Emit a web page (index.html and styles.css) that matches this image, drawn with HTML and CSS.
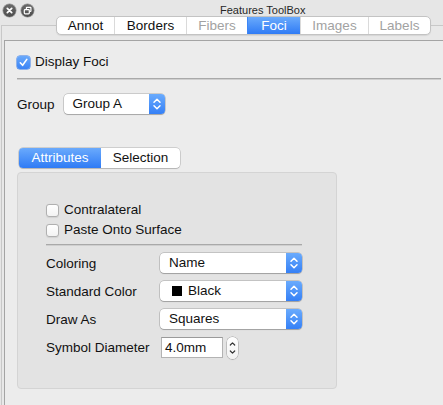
FILE: index.html
```html
<!DOCTYPE html>
<html>
<head>
<meta charset="utf-8">
<title>Features ToolBox</title>
<link rel="stylesheet" href="styles.css">
</head>
<body>
<div class="window">
  <header class="titlebar">
    <div class="lights">
      <span class="light"><svg width="13" height="13" viewBox="0 0 13 13"><path d="M4.3 4.3 L8.7 8.7 M8.7 4.3 L4.3 8.7" stroke="#fff" stroke-width="1.7" stroke-linecap="round" fill="none"/></svg></span>
      <span class="light"><svg width="13" height="13" viewBox="0 0 13 13"><rect x="3.3" y="5.6" width="5" height="4.2" rx="0.8" stroke="#fff" stroke-width="1.2" fill="none"/><path d="M5.4 5.2 V3.8 Q5.4 3.3 5.9 3.3 H9.4 Q9.9 3.3 9.9 3.8 V7 Q9.9 7.5 9.4 7.5 H8.8" stroke="#fff" stroke-width="1.2" fill="none"/></svg></span>
    </div>
    <div class="title">Features ToolBox</div>
  </header>

  <nav class="tabs">
    <span class="tab tab-annot">Annot</span>
    <span class="tab tab-borders">Borders</span>
    <span class="tab tab-fibers disabled">Fibers</span>
    <span class="tab tab-foci selected">Foci</span>
    <span class="tab tab-images disabled">Images</span>
    <span class="tab tab-labels disabled">Labels</span>
  </nav>

  <section class="pane">
    <div class="frame">
      <div class="check-row">
        <span class="cb checked"><svg width="13" height="13" viewBox="0 0 13 13"><path d="M3.3 6.8 L5.6 9.3 L9.8 3.4" stroke="#fff" stroke-width="1.6" stroke-linecap="round" stroke-linejoin="round" fill="none"/></svg></span>
        <span>Display Foci</span>
      </div>
      <div class="sep"></div>

      <div class="group-row">
        <span>Group</span>
        <div class="combo combo-group">
          <span class="combo-label">Group A</span>
          <span class="combo-btn"><svg width="16" height="20" viewBox="0 0 16 20"><path d="M5 8.3 L8 5.3 L11 8.3 M5 11.7 L8 14.7 L11 11.7" stroke="#fff" stroke-width="1.5" stroke-linecap="round" stroke-linejoin="round" fill="none"/></svg></span>
        </div>
      </div>

      <div class="seg">
        <span class="seg-item selected">Attributes</span>
        <span class="seg-item seg-sel">Selection</span>
      </div>

      <div class="box">
        <div class="check-row small">
          <span class="cb"></span>
          <span>Contralateral</span>
        </div>
        <div class="check-row small second">
          <span class="cb"></span>
          <span>Paste Onto Surface</span>
        </div>
        <div class="sep inner"></div>

        <div class="form">
          <span class="flabel">Coloring</span>
          <div class="combo">
            <span class="combo-label">Name</span>
            <span class="combo-btn"><svg width="16" height="20" viewBox="0 0 16 20"><path d="M5 8.3 L8 5.3 L11 8.3 M5 11.7 L8 14.7 L11 11.7" stroke="#fff" stroke-width="1.5" stroke-linecap="round" stroke-linejoin="round" fill="none"/></svg></span>
          </div>

          <span class="flabel">Standard Color</span>
          <div class="combo">
            <span class="combo-label swatch-label"><span class="swatch"></span>Black</span>
            <span class="combo-btn"><svg width="16" height="20" viewBox="0 0 16 20"><path d="M5 8.3 L8 5.3 L11 8.3 M5 11.7 L8 14.7 L11 11.7" stroke="#fff" stroke-width="1.5" stroke-linecap="round" stroke-linejoin="round" fill="none"/></svg></span>
          </div>

          <span class="flabel">Draw As</span>
          <div class="combo">
            <span class="combo-label">Squares</span>
            <span class="combo-btn"><svg width="16" height="20" viewBox="0 0 16 20"><path d="M5 8.3 L8 5.3 L11 8.3 M5 11.7 L8 14.7 L11 11.7" stroke="#fff" stroke-width="1.5" stroke-linecap="round" stroke-linejoin="round" fill="none"/></svg></span>
          </div>

          <span class="flabel">Symbol Diameter</span>
          <div class="spin">
            <span class="spin-field">4.0mm</span>
            <span class="spin-btn"><svg width="11" height="22" viewBox="0 0 11 22"><path d="M3.3 8 L5.5 5.8 L7.7 8 M3.3 14 L5.5 16.2 L7.7 14" stroke="#333" stroke-width="1.2" stroke-linecap="round" stroke-linejoin="round" fill="none"/></svg></span>
          </div>
        </div>
      </div>
    </div>
  </section>
</div>
</body>
</html>
```

FILE: styles.css
```css
* { box-sizing: border-box; margin: 0; padding: 0; }

html, body {
  width: 443px;
  height: 405px;
  overflow: hidden;
}

body {
  background: #e6e6e6;
  font-family: "Liberation Sans", Arial, sans-serif;
  font-size: 13.5px;
  color: #111;
}

.window {
  width: 443px;
  height: 405px;
}

/* title bar */
.titlebar {
  display: flex;
  height: 16px;
  padding-left: 3px;
}

.lights {
  display: flex;
  gap: 5px;
  margin-top: 4px;
}

.light {
  width: 13px;
  height: 13px;
  border-radius: 50%;
  background: linear-gradient(#6b6b6b, #4c4c4c);
  box-shadow: 0 0 0 0.5px rgba(0,0,0,0.35);
  display: flex;
}

.title {
  margin-left: 186px;
  padding-top: 3px;
  font-size: 11px;
  line-height: 14px;
  color: #262626;
  white-space: nowrap;
}

/* top tab bar */
.tabs {
  position: relative;
  z-index: 1;
  display: flex;
  width: max-content;
  height: 19px;
  margin-left: 56px;
  background: #fff;
  border: 1px solid #c3c3c3;
  border-radius: 5px;
  overflow: hidden;
  box-shadow: 0 1px 1px rgba(0,0,0,0.08);
}

.tab {
  line-height: 17px;
  text-align: center;
  border-left: 1px solid #dadada;
  color: #111;
}

.tab-annot { width: 57px; border-left: none; }
.tab-borders { width: 72px; }
.tab-fibers { width: 61px; }
.tab-foci { width: 53px; }
.tab-images { width: 68px; }
.tab-labels { width: 62px; }

.tab.disabled { color: #a2a2a2; }

.tab.selected {
  color: #fff;
  background: linear-gradient(#6aaafc, #2f7bf5);
  border-left-color: #3d86f6;
}

/* tab pane */
.pane {
  margin-top: -10px;
  margin-left: 1px;
  height: 380px;
  border-top: 1px solid #c8c8c8;
  border-left: 1px solid #c8c8c8;
  background: #e8e8e8;
}

.frame {
  margin: 14px 0 0 2px;
  height: 366px;
  border-top: 1px solid #a4a4a4;
  border-left: 1px solid #a4a4a4;
  background: #ececec;
  padding: 13px 2px 0 12px;
}

/* checkboxes */
.check-row {
  display: flex;
  align-items: center;
  gap: 5px;
  height: 16px;
  line-height: 16px;
}

.check-row.small {
  height: 14px;
  line-height: 14px;
}

.check-row.second { margin-top: 6px; }

.cb {
  flex: none;
  width: 13px;
  height: 13px;
  border-radius: 3px;
  border: 1px solid #b0b0b0;
  background: linear-gradient(#ffffff, #f3f3f3);
  box-shadow: 0 0.5px 1px rgba(0,0,0,0.08);
  display: flex;
}

.cb.checked {
  border: none;
  background: linear-gradient(#6aa9fb, #3a83f5);
  box-shadow: 0 0 0 0.5px #3278e8;
}

/* separators */
.sep {
  margin-top: 8px;
  height: 2px;
  border-top: 1px solid #a9a9a9;
  border-bottom: 1px solid #cfcfcf;
}

.sep.inner {
  width: 256px;
  margin-top: 7px;
}

/* group row */
.group-row {
  display: flex;
  align-items: center;
  gap: 9px;
  margin-top: 14px;
  height: 20px;
}

/* popup combo */
.combo {
  display: flex;
  height: 20px;
  width: 142px;
  background: #fff;
  border-radius: 4px;
  overflow: hidden;
  box-shadow: 0 0 0 0.5px rgba(0,0,0,0.28), 0 1px 1px rgba(0,0,0,0.18);
}

.combo-group { width: 101px; }

.combo-label {
  flex: 1;
  padding-left: 9px;
  line-height: 20px;
  white-space: nowrap;
}

.swatch-label {
  display: flex;
  align-items: center;
  gap: 6px;
  padding-left: 12px;
}

.swatch {
  width: 10px;
  height: 10px;
  background: #000;
}

.combo-btn {
  flex: none;
  width: 16px;
  background: linear-gradient(#6aabfd, #3580f6);
  display: flex;
}

/* segmented control */
.seg {
  display: flex;
  width: max-content;
  margin-top: 34px;
  margin-left: 2px;
  height: 20px;
  border-radius: 4px;
  overflow: hidden;
  background: #fff;
  box-shadow: 0 0 0 0.5px rgba(0,0,0,0.25), 0 1px 1px rgba(0,0,0,0.12);
}

.seg-item {
  line-height: 20px;
  text-align: center;
  width: 82px;
}

.seg-item.seg-sel { width: 79px; }

.seg-item.selected {
  color: #fff;
  background: linear-gradient(#6aaafc, #2f7bf5);
}

/* group box */
.box {
  margin-top: 4px;
  width: 320px;
  height: 217px;
  background: #e3e3e3;
  border: 1px solid #d4d4d4;
  border-radius: 4px;
  padding: 30px 0 0 28px;
}

.form {
  margin-top: 7px;
  display: grid;
  grid-template-columns: 114px 142px;
  grid-auto-rows: 20px;
  row-gap: 8px;
  align-items: center;
}

.flabel {
  white-space: nowrap;
}

/* spin box */
.spin {
  display: flex;
  align-items: center;
  gap: 4px;
  margin-left: 1px;
  height: 21px;
  margin-top: 1px;
}

.spin-field {
  width: 62px;
  height: 21px;
  line-height: 19px;
  padding-left: 3px;
  background: #fff;
  border: 1px solid #b3b3b3;
  border-top-color: #9a9a9a;
}

.spin-btn {
  width: 11px;
  height: 22px;
  border-radius: 6px;
  background: linear-gradient(#ffffff, #f2f2f2);
  box-shadow: 0 0 0 0.5px rgba(0,0,0,0.3), 0 1px 1px rgba(0,0,0,0.1);
  display: flex;
}
```
